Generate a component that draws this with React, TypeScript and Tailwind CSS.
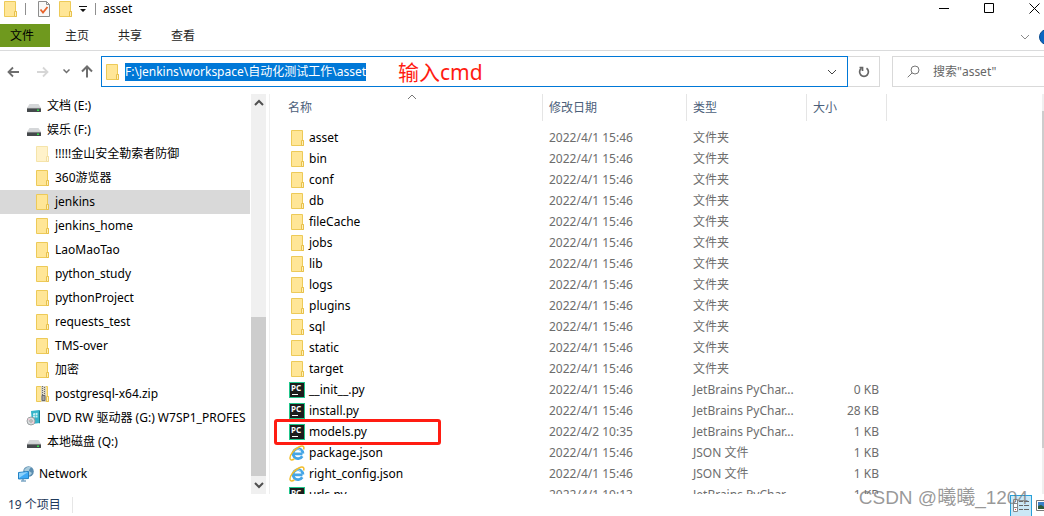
import React from "react";

type IconName =
  | "folder"
  | "folderFaded"
  | "zip"
  | "drive"
  | "dvd"
  | "network"
  | "pycharm"
  | "ie";

interface NavItem {
  label: string;
  icon: IconName;
  level: 0 | 1 | 2;
  active?: boolean;
}

interface FileRow {
  name: string;
  icon: IconName;
  date: string;
  type: string;
  size?: string;
  marked?: boolean;
}

const navItems: NavItem[] = [
  { label: "文档 (E:)", icon: "drive", level: 1 },
  { label: "娱乐 (F:)", icon: "drive", level: 1 },
  { label: "!!!!!金山安全勒索者防御", icon: "folderFaded", level: 2 },
  { label: "360游览器", icon: "folder", level: 2 },
  { label: "jenkins", icon: "folder", level: 2, active: true },
  { label: "jenkins_home", icon: "folder", level: 2 },
  { label: "LaoMaoTao", icon: "folder", level: 2 },
  { label: "python_study", icon: "folder", level: 2 },
  { label: "pythonProject", icon: "folder", level: 2 },
  { label: "requests_test", icon: "folder", level: 2 },
  { label: "TMS-over", icon: "folder", level: 2 },
  { label: "加密", icon: "folder", level: 2 },
  { label: "postgresql-x64.zip", icon: "zip", level: 2 },
  { label: "DVD RW 驱动器 (G:) W7SP1_PROFES", icon: "dvd", level: 1 },
  { label: "本地磁盘 (Q:)", icon: "drive", level: 1 },
  { label: "Network", icon: "network", level: 0 },
];

const folderNames = [
  "asset",
  "bin",
  "conf",
  "db",
  "fileCache",
  "jobs",
  "lib",
  "logs",
  "plugins",
  "sql",
  "static",
  "target",
];

const PY_TYPE = "JetBrains PyChar...";

const files: FileRow[] = [
  ...folderNames.map((name): FileRow => ({
    name,
    icon: "folder",
    date: "2022/4/1 15:46",
    type: "文件夹",
  })),
  { name: "__init__.py", icon: "pycharm", date: "2022/4/1 15:46", type: PY_TYPE, size: "0 KB" },
  { name: "install.py", icon: "pycharm", date: "2022/4/1 15:46", type: PY_TYPE, size: "28 KB" },
  { name: "models.py", icon: "pycharm", date: "2022/4/2 10:35", type: PY_TYPE, size: "1 KB", marked: true },
  { name: "package.json", icon: "ie", date: "2022/4/1 15:46", type: "JSON 文件", size: "1 KB" },
  { name: "right_config.json", icon: "ie", date: "2022/4/1 15:46", type: "JSON 文件", size: "1 KB" },
  { name: "urls.py", icon: "pycharm", date: "2022/4/1 19:13", type: PY_TYPE, size: "1 KB" },
];

const indent = {
  0: "pl-[18px] mt-2",
  1: "pl-[26px]",
  2: "pl-[34px]",
};

const FolderShape = () => (
  <>
    <path d="M2.5.5h11v10h1v5h-12z" fill="#ffe697" stroke="#edca58" />
    <path d="M12.5 15.5v-5h2v5z" fill="#fff0b8" stroke="#e8c14c" />
  </>
);

const Icon: React.FC<{ name: IconName }> = ({ name }) => (
  <svg width="16" height="16" viewBox="0 0 16 16" fill="none" className="shrink-0">
    {name === "folder" && <FolderShape />}
    {name === "folderFaded" && (
      <g opacity="0.5">
        <FolderShape />
      </g>
    )}
    {name === "zip" && (
      <>
        <FolderShape />
        <path d="M7 0h5v16H7z" fill="#d8d4c4" />
        <path d="M8.5 0v10M10.5 1v9" stroke="#6b6b6b" strokeDasharray="1 1" />
        <path d="M8 9.5h3v5H8z" fill="#a5a5a5" stroke="#6a6a6a" />
      </>
    )}
    {name === "drive" && (
      <>
        <path d="M3.500 6h9l2.500 4H1z" fill="#d5d7d9" />
        <rect x="1" y="10" width="14" height="4" rx=".5" fill="#45494c" />
        <path d="M1 10.400h14" stroke="#8b8e90" strokeWidth=".8" />
        <rect x="11" y="11.500" width="2" height="1.500" fill="#35e04b" />
      </>
    )}
    {name === "dvd" && (
      <>
        <path d="M5 1l8-1 1 1v12l-8 1z" fill="#35b4c9" />
        <path d="M13 0l1 1v12l-1 .5z" fill="#1b8296" />
        <path d="M7 3.500l2-.5v2H7zM9.500 3l2-.3V5h-2zM7 5.500h2v2H7zM9.500 5.500h2v2h-2z" fill="#c6f0f4" />
        <circle cx="5" cy="11" r="4" fill="#d8dcdd" stroke="#8c9193" strokeWidth=".8" />
        <path d="M5 11L2 8.600M5 11l3 2.300" stroke="#f7c7d6" strokeWidth="1.200" />
        <circle cx="5" cy="11" r="1.200" fill="#fff" stroke="#777" strokeWidth=".7" />
      </>
    )}
    {name === "network" && (
      <>
        <circle cx="10.500" cy="5.500" r="5.300" fill="#5b8db0" />
        <path d="M6 4c2-3 5-4 7-3-1 2-2 2-2 4l3 2c-1 2-3 3-5 3 1-2-1-3-3-6z" fill="#a9cbdc" />
        <path d="M.5 6.500l10-1v7l-10 .5z" fill="#3ea9f5" stroke="#2382c4" />
        <path d="M1 7l9-.9L1 12z" fill="#8ed2fb" />
        <path d="M5 13v1.500M3 15h5" stroke="#3b7ba8" />
      </>
    )}
    {name === "pycharm" && (
      <>
        <rect x=".5" y=".5" width="15" height="15" fill="#1c1c1c" stroke="#21c68b" />
        <text x="2" y="9" fill="#fff" fontSize="8" fontWeight="700" fontFamily="Noto Sans, sans-serif">
          PC
        </text>
        <path d="M3 12.500h6" stroke="#fff" />
      </>
    )}
    {name === "ie" && (
      <>
        <path
          d="M13.500 8.900H4.900M13.300 11.200a5 5 0 1 1 .7-2.600"
          stroke="#45a5e6"
          strokeWidth="2.700"
        />
        <path d="M4.300 6.500a4.500 4.500 0 0 1 7.500-1" stroke="#9cd7f7" strokeWidth="1" />
        <path
          d="M14.600 4.500C15.700 1 13.500.2 9.800 2 5 4.500.6 10 1 13.500c.2 1.900 2.200 1.700 4.400.5"
          stroke="#f2bd2c"
          strokeWidth="1.500"
        />
      </>
    )}
  </svg>
);

const Chevron: React.FC<{ d: string; className?: string }> = ({ d, className }) => (
  <svg width="10" height="10" viewBox="0 0 10 10" fill="none" stroke="currentColor" className={className}>
    <path d={d} />
  </svg>
);

const DOWN = "M1 3l4 4 4-4";
const UP = "M1 7l4-4 4 4";

const TitleBar = () => (
  <header className="flex h-6 items-start justify-between">
    <div className="flex h-[17px] items-center">
      <span className="ml-[2px]">
        <Icon name="folder" />
      </span>
      <span className="ml-[7px] h-3 w-px bg-[#8f8f8f]" />
      <button aria-label="属性" className="ml-[11px]">
        <svg width="14" height="16" viewBox="0 0 14 16" fill="none">
          <path d="M1.500.5h8l3 3v12h-11z" fill="#f8f8f8" stroke="#8d8d8d" />
          <path d="M9.500.5v3h3" stroke="#8d8d8d" />
          <path d="M3.500 8.500l2.500 3 4.500-5.500" stroke="#e8622a" strokeWidth="1.800" />
        </svg>
      </button>
      <button aria-label="新建文件夹" className="ml-[6px]">
        <Icon name="folder" />
      </button>
      <button aria-label="自定义快速访问工具栏" className="ml-[6px]">
        <svg width="8" height="8" viewBox="0 0 8 8">
          <path d="M0 1h8v1H0zM1 4h6L4 7z" fill="#111" />
        </svg>
      </button>
      <span className="ml-2 h-3 w-px bg-[#8f8f8f]" />
      <h1 className="ml-[7px]">asset</h1>
    </div>
    <div className="flex h-[17px] items-center gap-[34px] pr-1">
      <button aria-label="最小化">
        <svg width="11" height="11" viewBox="0 0 11 11" stroke="#000">
          <path d="M0 5.500h10" />
        </svg>
      </button>
      <button aria-label="最大化">
        <svg width="11" height="11" viewBox="0 0 11 11" stroke="#000" fill="none">
          <path d="M.5.5h9v9h-9z" />
        </svg>
      </button>
      <button aria-label="关闭">
        <svg width="11" height="11" viewBox="0 0 11 11" stroke="#000">
          <path d="M.5.5l10 10M10.500.5l-10 10" />
        </svg>
      </button>
    </div>
  </header>
);

const Ribbon = () => (
  <nav className="flex h-[27px] items-start justify-between overflow-hidden border-b border-[#dadbdc]">
    <div className="flex h-[23px] gap-px text-[#262626]">
      <button className="w-[50px] bg-[#6f991e] pr-[6px] text-black">文件</button>
      <button className="px-[14px]">主页</button>
      <button className="px-[14px]">共享</button>
      <button className="px-[14px]">查看</button>
    </div>
    <div className="flex h-[25px] items-center gap-[9px]">
      <button aria-label="展开功能区" className="text-[#8a8a8a]">
        <Chevron d={DOWN} />
      </button>
      <button aria-label="帮助" className="w-[5px] overflow-hidden">
        <svg width="16" height="16" viewBox="0 0 16 16">
          <circle cx="8" cy="8" r="7.500" fill="#0a66c2" stroke="#0b4c8f" />
        </svg>
      </button>
    </div>
  </nav>
);

const AddressBar = () => (
  <div className="flex h-[43px] items-start pt-[5px]">
    <div className="flex h-[31px] w-[101px] shrink-0 items-center pl-[7px] text-[#6e6e6e]">
      <button aria-label="后退">
        <svg width="13" height="12" viewBox="0 0 13 12" fill="none" stroke="currentColor" strokeWidth="1.800">
          <path d="M12 6H1.500M6 1.500L1.500 6 6 10.500" />
        </svg>
      </button>
      <button aria-label="前进" className="ml-4 text-[#d6d6d6]">
        <svg width="13" height="12" viewBox="0 0 13 12" fill="none" stroke="currentColor" strokeWidth="1.800">
          <path d="M1 6h10.500M7 1.500L11.500 6 7 10.500" />
        </svg>
      </button>
      <button aria-label="最近位置" className="ml-[14px]">
        <svg width="7" height="5" viewBox="0 0 7 5" fill="none" stroke="currentColor" strokeWidth="1.500">
          <path d="M.5.5l3 3 3-3" />
        </svg>
      </button>
      <button aria-label="上移" className="ml-[11px]">
        <svg width="12" height="13" viewBox="0 0 12 13" fill="none" stroke="currentColor" strokeWidth="2">
          <path d="M6 12.500V1.500M1 6.500l5-5 5 5" />
        </svg>
      </button>
    </div>

    <div className="flex h-[31px] min-w-0 flex-1 items-center border border-[#0078d7] pl-[2px]">
      <Icon name="folder" />
      <input
        aria-label="地址"
        defaultValue="F:\jenkins\workspace\自动化测试工作\asset"
        className="field-sizing-content ml-[5px] h-[18px] bg-[#0078d7] leading-[18px] text-white outline-none"
      />
      <span className="ml-8 text-[21px] leading-7 text-[#ff1c12]">输入cmd</span>
      <button aria-label="历史地址" className="mr-[10px] ml-auto text-[#444]">
        <Chevron d={DOWN} />
      </button>
    </div>
    <button
      aria-label="刷新"
      className="flex h-[31px] w-8 shrink-0 items-center justify-center border border-l-0 border-[#d9d9d9] text-[#666]"
    >
      <svg width="12" height="12" viewBox="0 0 12 12" fill="none" stroke="currentColor" strokeWidth="1.700">
        <path d="M8.500 2.300a4.400 4.400 0 1 1-5 0" />
        <path d="M1.500 1.500h3v3.500" />
      </svg>
    </button>
    <div className="ml-3 flex h-[31px] w-[152px] shrink-0 items-center border border-r-0 border-[#d9d9d9] pl-[14px]">
      <svg width="13" height="13" viewBox="0 0 13 13" fill="none" stroke="#777">
        <circle cx="8" cy="5" r="4" />
        <path d="M5.200 7.800L.7 12.300" />
      </svg>
      <input
        aria-label="搜索"
        placeholder={'搜索"asset"'}
        className="ml-[13px] w-24 outline-none placeholder:text-[#666]"
      />
    </div>
  </div>
);

const NavPane = () => (
  <aside className="flex w-[269px] shrink-0">
    <ul className="w-[250px] overflow-hidden">
      {navItems.map((item) => (
        <li key={item.label}>
          <button
            className={`flex h-6 w-full items-center gap-[5px] text-left whitespace-nowrap ${
              indent[item.level]
            } ${item.active ? "bg-[#d9d9d9]" : ""}`}
          >
            <Icon name={item.icon} />
            <span>{item.label}</span>
          </button>
        </li>
      ))}
    </ul>
    <div className="ml-px flex w-[15px] flex-col items-center bg-[#f0f0f0] text-[#505050]">
      <Chevron d={UP} className="my-1 stroke-2" />
      <div className="flex-[9]" />
      <div className="w-full flex-[7] bg-[#cdcdcd]" />
      <Chevron d={DOWN} className="my-1 stroke-2" />
    </div>
  </aside>
);

const FileList = () => (
  <main className="relative min-w-0 flex-1 overflow-hidden border-l border-[#f0f0f0]">
    <Chevron d={UP} className="absolute top-[-2px] left-[137px] text-[#777]" />
    <table className="w-[617px] table-fixed border-separate border-spacing-0 text-left">
      <colgroup>
        <col className="w-[273px]" />
        <col className="w-36" />
        <col className="w-[120px]" />
        <col className="w-20" />
      </colgroup>
      <thead className="text-[#4c607a]">
        <tr className="h-[27px]">
          <th className="border-r border-[#e5e5e5] pl-[18px] font-normal">名称</th>
          <th className="border-r border-[#e5e5e5] pl-[6px] font-normal">修改日期</th>
          <th className="border-r border-[#e5e5e5] pl-[6px] font-normal">类型</th>
          <th className="border-r border-[#e5e5e5] pl-[6px] font-normal">大小</th>
        </tr>
      </thead>
      <tbody className="text-[#6d6d6d] before:block before:h-[6px]">
        {files.map((file) => (
          <tr key={file.name} className="h-[21px]">
            <td className="relative p-0 pl-[19px] text-black">
              <div className="flex items-center gap-1">
                <Icon name={file.icon} />
                <span>{file.name}</span>
              </div>
              {file.marked && (
                <span className="absolute -top-[2px] left-1 h-[26px] w-[167px] rounded-[3px] border-3 border-[#ff1c12]" />
              )}
            </td>
            <td className="p-0 pl-[6px]">{file.date}</td>
            <td className="p-0 pl-[6px] whitespace-nowrap">{file.type}</td>
            <td className="p-0 pr-2 text-right">{file.size}</td>
          </tr>
        ))}
      </tbody>
    </table>
  </main>
);

const StatusBar = () => (
  <footer className="flex h-[22px] shrink-0 items-center justify-between overflow-hidden">
    <div className="flex items-center pl-2 text-[#1e395b]">
      <span>19 个项目</span>
      <span className="ml-[11px] h-4 w-px bg-[#e6e6e6]" />
    </div>
    <div className="flex h-[22px] items-start gap-1">
      <button
        aria-label="详细信息"
        className="mt-px flex h-[22px] w-[22px] items-center justify-center border border-[#26a0da] bg-[#cbe8f6]"
      >
        <svg width="18" height="14" viewBox="0 0 18 14" fill="none">
          <path d="M1.500.5h4v12h-4zM1.500 4.500h4M1.500 8.500h4" fill="#fff" stroke="#888" />
          <path d="M3 2h1v1H3z" fill="#4a90d9" />
          <path d="M3 10h1v1H3z" fill="#d94040" />
          <path d="M7 2.500h4M12 2.500h5M7 6.500h4M12 6.500h5M7 10.500h4M12 10.500h5" stroke="#666" />
        </svg>
      </button>
      <button aria-label="大缩略图" className="mt-[6px] w-2 overflow-hidden">
        <svg width="14" height="12" viewBox="0 0 14 12">
          <path d="M.5.5h13v10H.5z" fill="#fff" stroke="#777" />
          <path d="M2 2h10v7H2z" fill="#3a7fc8" />
          <path d="M2 9V6l3-1 7 4z" fill="#2f5a3a" />
        </svg>
      </button>
    </div>
  </footer>
);

const App: React.FC = () => {
  return (
    <div className="relative flex h-screen flex-col overflow-hidden bg-white font-['Noto_Sans','Noto_Sans_CJK_SC',sans-serif] text-xs leading-[18px] text-black">
      <TitleBar />
      <Ribbon />
      <AddressBar />

      <div className="flex min-h-0 flex-1">
        <NavPane />
        <FileList />
        {/* List scrollbar, cut off by the window edge */}
        <div className="flex w-[2px] flex-col bg-[#f0f0f0] pt-[17px]">
          <div className="flex-[22] bg-[#cdcdcd]" />
          <div className="flex-[3]" />
        </div>
      </div>

      <StatusBar />

      <span className="pointer-events-none absolute right-4 bottom-1 font-['Liberation_Sans','Noto_Sans_CJK_SC',sans-serif] text-[19px] leading-7 text-[#777]/75">
        CSDN @曦曦_1204
      </span>
    </div>
  );
};

export default App;
